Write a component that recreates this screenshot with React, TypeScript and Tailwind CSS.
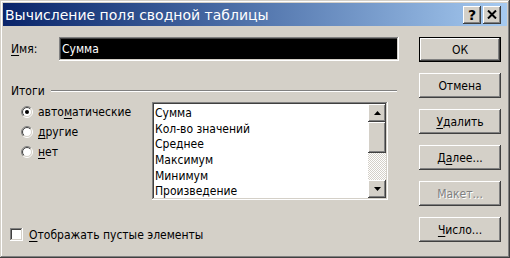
import React from "react";

const raised =
  "shadow-[inset_-1px_-1px_#404040,inset_1px_1px_#ffffff,inset_-2px_-2px_#808080,inset_2px_2px_#d4d0c8]";
const sunken =
  "shadow-[inset_-1px_-1px_#ffffff,inset_1px_1px_#808080,inset_-2px_-2px_#d4d0c8,inset_2px_2px_#404040]";

function Radio({ checked }: { checked?: boolean }) {
  return (
    <svg width="12" height="12" viewBox="0 0 12 12" className="shrink-0">
      <defs>
        <linearGradient id="ro" x1="0" y1="0" x2="1" y2="1">
          <stop offset="0.5" stopColor="#808080" />
          <stop offset="0.5" stopColor="#ffffff" />
        </linearGradient>
        <linearGradient id="ri" x1="0" y1="0" x2="1" y2="1">
          <stop offset="0.5" stopColor="#404040" />
          <stop offset="0.5" stopColor="#d4d0c8" />
        </linearGradient>
      </defs>
      <circle cx="6" cy="6" r="5.5" fill="none" stroke="url(#ro)" />
      <circle cx="6" cy="6" r="4.5" fill="#ffffff" stroke="url(#ri)" />
      {checked && <circle cx="6" cy="6" r="2" fill="#000" />}
    </svg>
  );
}

function Btn({
  children,
  def,
}: {
  children: React.ReactNode;
  def?: boolean;
}) {
  return (
    <div
      className={
        "w-[82px] h-[25px] flex items-center justify-center bg-[#d4d0c8] " +
        (def
          ? "shadow-[inset_0_0_0_1px_#000,inset_-2px_-2px_#404040,inset_2px_2px_#ffffff,inset_-3px_-3px_#808080]"
          : raised)
      }
    >
      {children}
    </div>
  );
}

function U({ children }: { children: React.ReactNode }) {
  return <span className="underline underline-offset-2">{children}</span>;
}

function Arrow({ up }: { up?: boolean }) {
  return (
    <svg width="7" height="4" viewBox="0 0 7 4">
      {up ? (
        <polygon points="3.5,0 7,4 0,4" fill="#000" />
      ) : (
        <polygon points="0,0 7,0 3.5,4" fill="#000" />
      )}
    </svg>
  );
}

export default function App() {
  const items = [
    "Сумма",
    "Кол-во значений",
    "Среднее",
    "Максимум",
    "Минимум",
    "Произведение",
  ];
  return (
    <div
      className="w-[510px] h-[258px] bg-[#d4d0c8] text-black text-[12px] leading-none overflow-hidden shadow-[inset_-1px_-1px_#404040,inset_1px_1px_#d4d0c8,inset_-2px_-2px_#808080,inset_2px_2px_#ffffff]"
      style={{ fontFamily: '"DejaVu Sans Condensed", "DejaVu Sans", sans-serif' }}
    >
      {/* title bar */}
      <div className="mx-[3px] mt-[3px] h-[23px] flex items-center bg-gradient-to-r from-[#0a246a] to-[#a6caf0]">
        <div
          className="pl-[2px] text-white text-[14px] flex-1"
          style={{ fontFamily: '"DejaVu Sans", sans-serif' }}
        >
          Вычисление поля сводной таблицы
        </div>
        <div className="flex gap-[2px] mr-[6px]">
          <div
            className={
              "w-[18px] h-[18px] bg-[#d4d0c8] flex items-center justify-center font-bold text-[14px] " +
              raised
            }
            style={{ fontFamily: '"DejaVu Sans", sans-serif' }}
          >
            ?
          </div>
          <div
            className={
              "w-[18px] h-[18px] bg-[#d4d0c8] flex items-center justify-center " +
              raised
            }
          >
            <svg width="10" height="9" viewBox="0 0 10 9">
              <path
                d="M1 0.5 L9 8.5 M9 0.5 L1 8.5"
                stroke="#000"
                strokeWidth="2"
              />
            </svg>
          </div>
        </div>
      </div>

      <div className="flex">
        {/* left side */}
        <div className="w-[419px] flex flex-col">
          <div className="mt-[11px] flex items-center h-[24px]">
            <div className="w-[59px] pl-[11px]">
              <U>И</U>мя:
            </div>
            <div className={"w-[340px] h-[24px] bg-black flex items-center " + sunken}>
              <span className="pl-[3px] text-white">Сумма</span>
            </div>
          </div>

          <div className="mt-[23px] h-[14px] flex items-center pl-[11px]">
            <span>Итоги</span>
            <div className="ml-[6px] flex-1 mr-[22px] h-[2px] border-t border-t-[#808080] border-b border-b-white" />
          </div>

          <div className="mt-[4px] flex">
            <div className="w-[152px] pl-[21px] flex flex-col">
              <div className="h-[20px] flex items-center gap-[5px]">
                <Radio checked />
                <span>
                  авто<U>м</U>атические
                </span>
              </div>
              <div className="h-[20px] flex items-center gap-[5px]">
                <Radio />
                <span>
                  <U>д</U>ругие
                </span>
              </div>
              <div className="h-[20px] flex items-center gap-[5px]">
                <Radio />
                <span>
                  <U>н</U>ет
                </span>
              </div>
            </div>
            <div className={"w-[236px] h-[98px] bg-white p-[2px] flex " + sunken}>
              <div className="flex-1 flex flex-col overflow-hidden pt-[1px]">
                {items.map((it) => (
                  <div key={it} className="h-[15.7px] shrink-0 flex items-center pl-[1px]">
                    {it}
                  </div>
                ))}
              </div>
              <div className="w-[18px] flex flex-col">
                <div className={"h-[18px] bg-[#d4d0c8] flex items-center justify-center " + raised}>
                  <Arrow up />
                </div>
                <div className={"h-[31px] bg-[#d4d0c8] " + raised} />
                <svg width="18" height="27" className="block">
                  <defs>
                    <pattern id="dith" width="2" height="2" patternUnits="userSpaceOnUse">
                      <rect width="2" height="2" fill="#d4d0c8" />
                      <rect width="1" height="1" fill="#ffffff" />
                      <rect x="1" y="1" width="1" height="1" fill="#ffffff" />
                    </pattern>
                  </defs>
                  <rect width="18" height="27" fill="url(#dith)" />
                </svg>
                <div className={"h-[18px] bg-[#d4d0c8] flex items-center justify-center " + raised}>
                  <Arrow />
                </div>
              </div>
            </div>
          </div>

          <div className="mt-[28px] pl-[10px] flex items-center gap-[6px]">
            <div className={"w-[13px] h-[13px] bg-white " + sunken} />
            <span>
              <U>О</U>тображать пустые элементы
            </span>
          </div>
        </div>

        {/* right buttons */}
        <div className="flex flex-col pt-[11px] gap-[11px]">
          <Btn def>ОК</Btn>
          <Btn>Отмена</Btn>
          <Btn>
            <span>
              <U>У</U>далить
            </span>
          </Btn>
          <Btn>
            <span>
              Д<U>а</U>лее...
            </span>
          </Btn>
          <Btn>
            <span className="text-[#808080] [text-shadow:1px_1px_#ffffff]">Макет...</span>
          </Btn>
          <Btn>
            <span>
              <U>Ч</U>исло...
            </span>
          </Btn>
        </div>
      </div>
    </div>
  );
}
